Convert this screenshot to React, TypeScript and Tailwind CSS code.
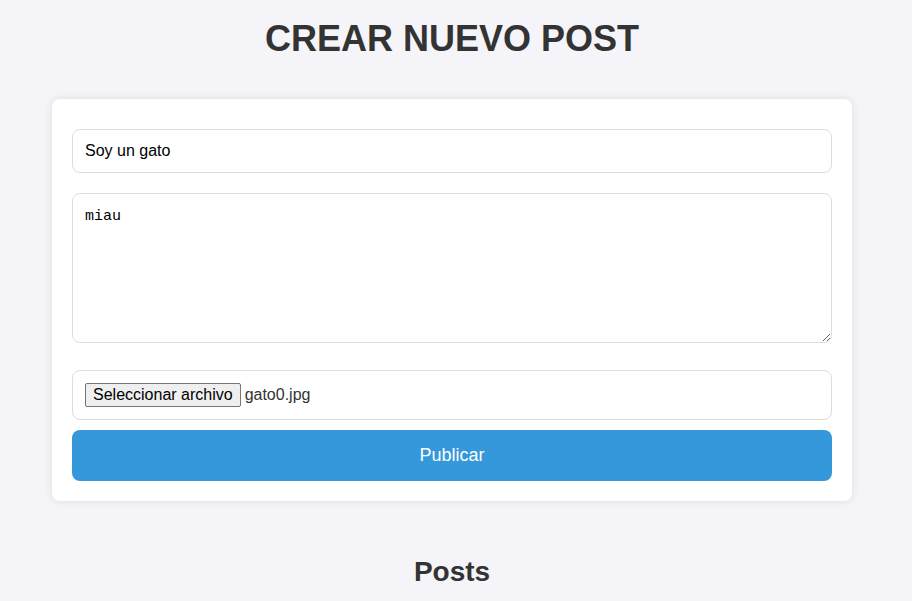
import React from "react"

export default function App() {
  return (
    <div className="min-h-screen bg-[#f4f4f9] pt-[18px] pr-2 font-['Liberation_Sans',Arial,sans-serif] text-[#333]">
      <h1 className="text-center text-[36px] font-bold leading-[41px] text-[#333]">CREAR NUEVO POST</h1>

      <div className="mx-auto mt-[40px] w-[800px] rounded-lg bg-white p-5 shadow-[0_0_10px_rgba(0,0,0,0.1)]">
        <form className="flex flex-col" onSubmit={(e) => e.preventDefault()}>
          <input
            type="text"
            defaultValue="Soy un gato"
            className="mt-[10px] h-[44px] w-full rounded-lg border border-[#ddd] px-3 text-[16px] text-black outline-none"
          />
          <textarea
            defaultValue="miau"
            className="mt-[20px] h-[150px] w-full rounded-lg border border-[#ddd] px-3 pt-[14px] font-['Liberation_Mono',monospace] text-[15px] leading-[17px] text-black outline-none"
          />
          <div className="mt-[27px] flex h-[50px] w-full items-center rounded-lg border border-[#ddd] px-3">
            <span className="flex h-[24px] items-center rounded-[2px] border border-[#767676] bg-[#efefef] px-[7px] text-[16px] text-black">
              Seleccionar archivo
            </span>
            <span className="ml-[4px] text-[16px] text-[#333]">gato0.jpg</span>
          </div>
          <button
            type="submit"
            className="mt-[10px] h-[51px] w-full rounded-lg bg-[#3498db] text-[18px] text-white"
          >
            Publicar
          </button>
        </form>
      </div>

      <h2 className="mt-[55px] text-center text-[28px] font-bold leading-[32px] text-[#333]">Posts</h2>
    </div>
  )
}
